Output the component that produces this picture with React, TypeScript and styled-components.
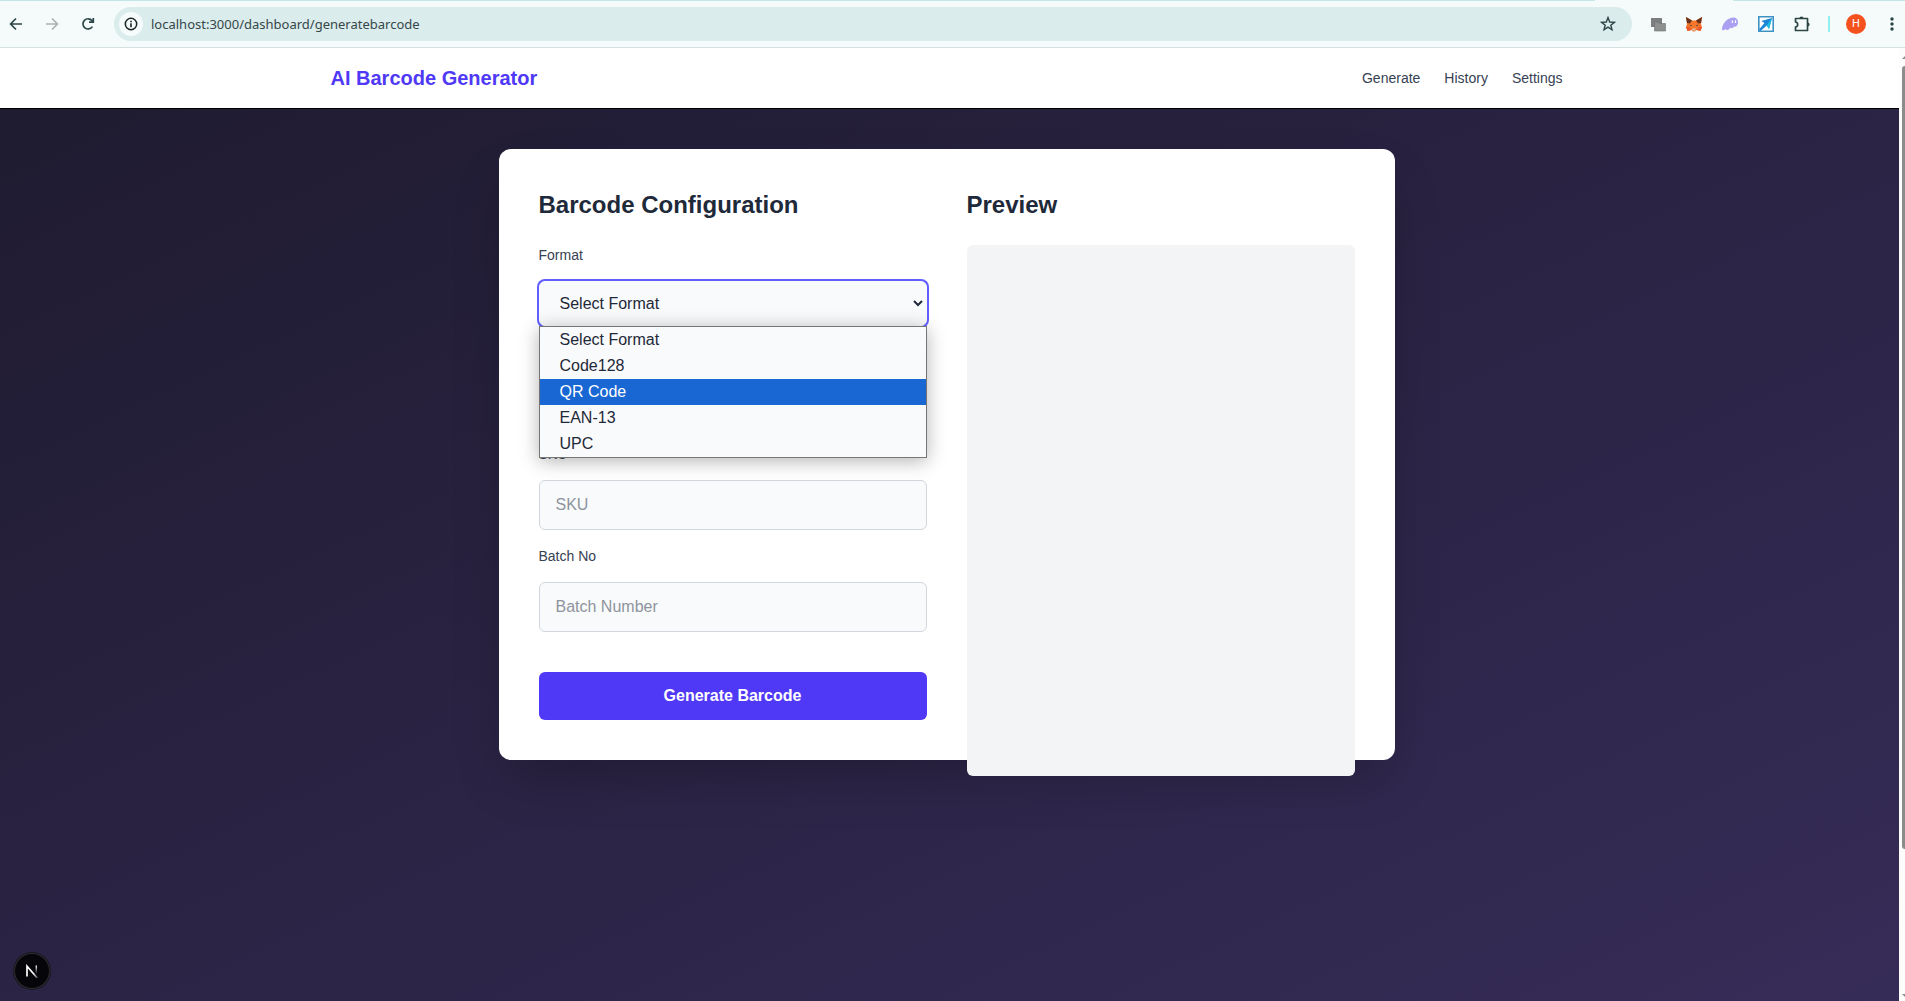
import React, { useState } from "react";
import styled, { createGlobalStyle } from "styled-components";

const GlobalStyle = createGlobalStyle`
  *, *::before, *::after { box-sizing: border-box; }
  body {
    margin: 0;
    font-family: "Liberation Sans", Arial, sans-serif;
    font-size: 16px;
    line-height: 24px;
    color: #1e2939;
    background: #ffffff;
  }
  button, input, select { font: inherit; color: inherit; margin: 0; }
  button { border: 0; padding: 0; background: none; cursor: pointer; }
  h1, h2, ul { margin: 0; padding: 0; }
  ul { list-style: none; }
`;

const Window = styled.div`
  min-height: 100vh;
  display: flex;
  flex-direction: column;
`;

/* ---------- browser toolbar ---------- */

const TabEdge = styled.div`
  display: flex;
  justify-content: space-between;
  height: 1px;
  background: #f4fbfa;
`;

const EdgeLine = styled.div<{ $width?: number }>`
  flex: ${(p) => (p.$width ? `0 0 ${p.$width}px` : "1")};
  margin-right: ${(p) => (p.$width ? 0 : 138)}px;
  background: #c3e5e6;
`;

const Toolbar = styled.div`
  display: flex;
  align-items: center;
  gap: 12px;
  height: 47px;
  padding: 0 1px 0 4px;
  background: #f4fbfa;
  border-bottom: 1px solid #d5e1e1;
`;

const IconButton = styled.button<{ $muted?: boolean }>`
  display: flex;
  align-items: center;
  justify-content: center;
  flex: 0 0 24px;
  height: 24px;
  color: ${(p) => (p.$muted ? "#a9b3b2" : "#2c4546")};
`;

const AddressBar = styled.div`
  display: flex;
  align-items: center;
  gap: 8px;
  flex: 1;
  height: 34px;
  margin: 0 2px;
  padding: 0 12px 0 5px;
  border-radius: 17px;
  background: #daeceb;
`;

const SiteInfo = styled(IconButton)`
  border-radius: 50%;
  background: #f4fbfa;
  color: #1c2626;
`;

const AddressInput = styled.input`
  flex: 1;
  min-width: 0;
  padding: 0;
  border: 0;
  outline: 0;
  background: transparent;
  font-family: "Noto Sans", sans-serif;
  font-size: 13px;
  line-height: 20px;
  color: #36474a;
`;

const Extensions = styled.div`
  display: flex;
  align-items: center;
  gap: 12px;
`;

const Divider = styled.span`
  width: 2px;
  height: 16px;
  margin: 0 2px;
  background: #8ff0ee;
`;

const Avatar = styled.span`
  display: flex;
  align-items: center;
  justify-content: center;
  width: 20px;
  height: 20px;
  border-radius: 50%;
  background: #f4511e;
  color: #ffffff;
  font-family: Roboto, sans-serif;
  font-size: 11px;
  line-height: 20px;
`;

/* ---------- page ---------- */

const Viewport = styled.div`
  display: flex;
  flex: 1;
`;

const Page = styled.div`
  display: flex;
  flex-direction: column;
  flex: 1;
  min-width: 0;
`;

const Header = styled.header`
  padding-right: 6px;
  background: #ffffff;
  border-bottom: 1px solid #000000;
`;

const HeaderInner = styled.div`
  display: flex;
  align-items: center;
  justify-content: space-between;
  max-width: 1280px;
  height: 60px;
  margin: 0 auto;
  padding: 0 24px;
`;

const Brand = styled.h1`
  font-size: 20px;
  line-height: 28px;
  font-weight: 700;
  color: #4f39f6;
`;

const Nav = styled.nav`
  display: flex;
  gap: 24px;
`;

const NavLink = styled.a`
  font-size: 14px;
  line-height: 20px;
  color: #364153;
  text-decoration: none;
`;

const Main = styled.main`
  flex: 1;
  padding: 40px 6px 40px 0;
  background: linear-gradient(to bottom right, #1f1b30, #362c58);
`;

const Card = styled.div`
  display: grid;
  grid-template-columns: 1fr 1fr;
  gap: 40px;
  max-width: 896px;
  margin: 0 auto;
  padding: 40px;
  border-radius: 12px;
  background: #ffffff;
  box-shadow: 0 25px 50px -12px rgba(0, 0, 0, 0.25);
`;

const SectionTitle = styled.h2`
  margin-bottom: 24px;
  font-size: 24px;
  line-height: 32px;
  font-weight: 700;
`;

const Form = styled.form`
  display: flex;
  flex-direction: column;
  gap: 16px;
`;

const Label = styled.label`
  min-height: 20px;
  font-size: 14px;
  line-height: 20px;
  color: #364153;
`;

const TextInput = styled.input`
  width: 100%;
  padding: 12px 16px;
  border: 1px solid #d1d5dc;
  border-radius: 6px;
  outline: 0;
  background: #f9fafb;
  line-height: 24px;
  height: 50px;
  &::placeholder { color: #8e949d; }
`;

const SelectWrap = styled.div`
  position: relative;
`;

const Select = styled.select`
  display: block;
  width: 100%;
  height: 45px;
  padding: 12px 16px;
  border: 1px solid #f9fafb;
  border-radius: 6px;
  outline: 0;
  background-color: #f9fafb;
  box-shadow: 0 0 0 2px #615fff;
`;

const OptionList = styled.ul`
  position: absolute;
  top: 100%;
  left: 0;
  right: 0;
  z-index: 1;
  border: 1px solid #767676;
  background: #f9fafb;
  box-shadow: 0 3px 18px rgba(0, 0, 0, 0.3);
`;

const Option = styled.li<{ $active: boolean }>`
  padding: 0 20px;
  line-height: 26px;
  color: ${(p) => (p.$active ? "#ffffff" : "#1e2939")};
  background: ${(p) => (p.$active ? "#1967d2" : "transparent")};
`;

const SubmitButton = styled.button`
  height: 48px;
  margin-top: 24px;
  border-radius: 6px;
  background: #4f39f6;
  color: #ffffff;
  font-weight: 700;
`;

const PreviewBox = styled.div`
  height: 100%;
  border-radius: 6px;
  background: #f3f4f6;
`;

const DevBadge = styled.button`
  position: fixed;
  left: 14px;
  bottom: 12px;
  display: flex;
  align-items: center;
  justify-content: center;
  width: 36px;
  height: 36px;
  border-radius: 50%;
  background: #06060a;
  box-shadow: inset 0 0 0 1px #2e2e33, 0 0 0 1px #1a1822;
`;

const Scrollbar = styled.div`
  display: flex;
  flex-direction: column;
  align-items: flex-end;
  flex: 0 0 6px;
  padding: 7px 0 3px;
  background: #fcfcfc;
  overflow: hidden;
`;

const ScrollTrack = styled.div`
  display: flex;
  flex: 1;
  width: 3px;
  padding: 7px 0;
`;

const ScrollThumb = styled.div`
  width: 3px;
  height: 85%;
  border-radius: 3px 0 0 3px;
  background: #8b8d8c;
`;

/* ---------- icons ---------- */

const BackIcon = () => (
  <svg width="14" height="14" viewBox="0 0 14 14" fill="none" stroke="currentColor" strokeWidth="1.7">
    <path d="M13 7H2M7 1.5L1.6 7L7 12.5" />
  </svg>
);

const ForwardIcon = () => (
  <svg width="14" height="14" viewBox="0 0 14 14" fill="none" stroke="currentColor" strokeWidth="1.7">
    <path d="M1 7H12M7 1.5L12.4 7L7 12.5" />
  </svg>
);

const ReloadIcon = () => (
  <svg width="14" height="14" viewBox="0 0 14 14" fill="none" stroke="currentColor" strokeWidth="1.7">
    <path d="M11.4 9.6A5.1 5.1 0 1 1 11 3.6L12.2 5" />
    <path d="M12.3 1V5.2H8" />
  </svg>
);

const InfoIcon = () => (
  <svg width="14" height="14" viewBox="0 0 14 14">
    <circle cx="7" cy="7" r="5.7" fill="none" stroke="currentColor" strokeWidth="1.5" />
    <path d="M6.2 6.2H7.8V10.2H6.2ZM6.2 3.8H7.8V5.3H6.2Z" fill="currentColor" />
  </svg>
);

const StarIcon = () => (
  <svg width="16" height="16" viewBox="0 0 16 16" fill="none" stroke="currentColor" strokeWidth="1.4">
    <path d="M8 1.6L9.7 6L14.4 6.3L10.8 9.2L12 13.8L8 11.2L4 13.8L5.2 9.2L1.6 6.3L6.3 6Z" />
  </svg>
);

const WindowsIcon = () => (
  <svg width="16" height="16" viewBox="0 0 16 16">
    <path d="M1 2H12V11H1Z" fill="#7d7f7f" />
    <path d="M4.5 6H8.5L9.5 7.5H15.5V15H4.5Z" fill="#8e9090" stroke="#6d6f6f" strokeWidth="0.6" />
  </svg>
);

const FoxIcon = () => (
  <svg width="18" height="16" viewBox="0 0 18 16">
    <path d="M1 1L7 4.5H11L17 1L16 8L17 11L15.5 15L11.5 14L10 15.5H8L6.5 14L2.5 15L1 11L2 8Z" fill="#f5762a" />
    <path d="M1 1L7 4.5L5 7.5L2 7ZM17 1L11 4.5L13 7.5L16 7Z" fill="#66301b" />
    <path d="M2.5 15L1 11H4.5L6.5 14ZM15.5 15L17 11H13.5L11.5 14Z" fill="#e8582a" />
    <path d="M4.5 8.5L7.2 9.8L6 10.2ZM13.5 8.5L10.8 9.8L12 10.2Z" fill="#233447" />
    <path d="M7.5 12.5H10.5L10.8 14.5H7.2Z" fill="#d7c1b3" />
  </svg>
);

const GhostIcon = () => (
  <svg width="18" height="16" viewBox="0 0 18 16">
    <path
      d="M1 12.5C2 7 6 2 12 1.5C15.5 1.3 17.4 4 17 7C16.7 9.7 14.8 11.2 13 10.6C12 12.6 10.3 12.6 9.3 11.6C7.5 14.8 5.2 14.6 4.7 12.8C3.8 14.6 .8 15 1 12.5Z"
      fill="#ab9ff2"
    />
    <path d="M11.4 5V6.4M14.5 5V6.4" stroke="#ffffff" strokeWidth="1.3" strokeLinecap="round" />
  </svg>
);

const ArrowTileIcon = () => (
  <svg width="16" height="16" viewBox="0 0 16 16">
    <path d="M.8 .8H15.2V15.2H.8Z" fill="#ffffff" stroke="#3f92c4" strokeWidth="1.6" />
    <path d="M14 2L11 13L8.7 9.5L2.5 15L1 13.5L6.5 7L3.3 5Z" fill="#1c86d6" />
    <path d="M14 2L11 13L8.7 9.5Z" fill="#1cc0e4" />
  </svg>
);

const PuzzleIcon = () => (
  <svg width="18" height="18" viewBox="0 0 18 18">
    <path
      d="M2.5 3.5H14.5V15.5H2.5V12C5.4 11.6 5.4 7.4 2.5 7Z"
      fill="none"
      stroke="currentColor"
      strokeWidth="1.7"
      strokeLinejoin="round"
    />
    <path d="M6.4 3.5A2.1 2.1 0 0 1 10.6 3.5ZM14.5 7.4A2.1 2.1 0 0 1 14.5 11.6Z" fill="currentColor" />
  </svg>
);

const MenuIcon = () => (
  <svg width="4" height="16" viewBox="0 0 4 16" fill="currentColor">
    <circle cx="2" cy="3" r="1.7" />
    <circle cx="2" cy="8" r="1.7" />
    <circle cx="2" cy="13" r="1.7" />
  </svg>
);

const NextIcon = () => (
  <svg width="14" height="14" viewBox="0 0 14 14" fill="none" strokeWidth="1.7">
    <defs>
      <linearGradient id="stem" x1="0" y1="0" x2="0" y2="1">
        <stop offset="0" stopColor="#ffffff" />
        <stop offset="1" stopColor="#ffffff" stopOpacity="0" />
      </linearGradient>
      <linearGradient id="slash" x1="0" y1="0" x2="1" y2="1">
        <stop offset="0.6" stopColor="#ffffff" />
        <stop offset="1" stopColor="#ffffff" stopOpacity="0.3" />
      </linearGradient>
    </defs>
    <path d="M2 12.5V2.2L12.3 14" stroke="url(#slash)" />
    <path d="M10.6 1.5H12V10H10.6Z" fill="url(#stem)" />
  </svg>
);

const ScrollArrow = ({ down = false }: { down?: boolean }) => (
  <svg width="3" height="4" viewBox="0 0 3 4">
    <path d={down ? "M0 0H3V3Z" : "M0 4H3V1Z"} fill="#8b8d8c" />
  </svg>
);

/* ---------- app ---------- */

const FORMATS = ["Select Format", "Code128", "QR Code", "EAN-13", "UPC"];

const FIELDS = [
  { id: "product", label: "", placeholder: "" },
  { id: "sku", label: "SKU", placeholder: "SKU" },
  { id: "batch", label: "Batch No", placeholder: "Batch Number" },
];

const LINKS = ["Generate", "History", "Settings"];

function BrowserToolbar() {
  return (
    <>
      <TabEdge>
        <EdgeLine />
        <EdgeLine $width={172} />
      </TabEdge>
      <Toolbar>
        <IconButton aria-label="Back"><BackIcon /></IconButton>
        <IconButton aria-label="Forward" $muted><ForwardIcon /></IconButton>
        <IconButton aria-label="Reload"><ReloadIcon /></IconButton>
        <AddressBar>
          <SiteInfo aria-label="Site information"><InfoIcon /></SiteInfo>
          <AddressInput aria-label="Address" defaultValue="localhost:3000/dashboard/generatebarcode" />
          <IconButton aria-label="Bookmark"><StarIcon /></IconButton>
        </AddressBar>
        <Extensions>
          <IconButton aria-label="Windows"><WindowsIcon /></IconButton>
          <IconButton aria-label="Fox wallet"><FoxIcon /></IconButton>
          <IconButton aria-label="Ghost wallet"><GhostIcon /></IconButton>
          <IconButton aria-label="Share"><ArrowTileIcon /></IconButton>
          <IconButton aria-label="Extensions"><PuzzleIcon /></IconButton>
          <Divider />
          <IconButton aria-label="Profile"><Avatar>H</Avatar></IconButton>
          <IconButton aria-label="Menu"><MenuIcon /></IconButton>
        </Extensions>
      </Toolbar>
    </>
  );
}

function FormatSelect() {
  const [format, setFormat] = useState(FORMATS[0]);
  const [active, setActive] = useState("QR Code");
  const [open, setOpen] = useState(true);
  return (
    <SelectWrap>
      <Select id="format" value={format} onChange={(e) => setFormat(e.target.value)}>
        {FORMATS.map((f) => <option key={f}>{f}</option>)}
      </Select>
      {open && (
        <OptionList role="listbox" aria-label="Format">
          {FORMATS.map((f) => (
            <Option
              key={f}
              role="option"
              aria-selected={f === active}
              $active={f === active}
              onMouseEnter={() => setActive(f)}
              onClick={() => {
                setFormat(f);
                setOpen(false);
              }}
            >
              {f}
            </Option>
          ))}
        </OptionList>
      )}
    </SelectWrap>
  );
}

export default function App() {
  return (
    <Window>
      <GlobalStyle />
      <BrowserToolbar />
      <Viewport>
        <Page>
          <Header>
            <HeaderInner>
              <Brand>AI Barcode Generator</Brand>
              <Nav>
                {LINKS.map((l) => <NavLink key={l} href={`#${l.toLowerCase()}`}>{l}</NavLink>)}
              </Nav>
            </HeaderInner>
          </Header>
          <Main>
            <Card>
              <section>
                <SectionTitle>Barcode Configuration</SectionTitle>
                <Form onSubmit={(e) => e.preventDefault()}>
                  <Label htmlFor="format">Format</Label>
                  <FormatSelect />
                  {FIELDS.map((f) => (
                    <React.Fragment key={f.id}>
                      <Label htmlFor={f.id}>{f.label}</Label>
                      <TextInput id={f.id} placeholder={f.placeholder} />
                    </React.Fragment>
                  ))}
                  <SubmitButton type="submit">Generate Barcode</SubmitButton>
                </Form>
              </section>
              <section>
                <SectionTitle>Preview</SectionTitle>
                <PreviewBox />
              </section>
            </Card>
          </Main>
        </Page>
        <Scrollbar>
          <ScrollArrow />
          <ScrollTrack><ScrollThumb /></ScrollTrack>
          <ScrollArrow down />
        </Scrollbar>
      </Viewport>
      <DevBadge aria-label="Open Next.js Dev Tools"><NextIcon /></DevBadge>
    </Window>
  );
}
